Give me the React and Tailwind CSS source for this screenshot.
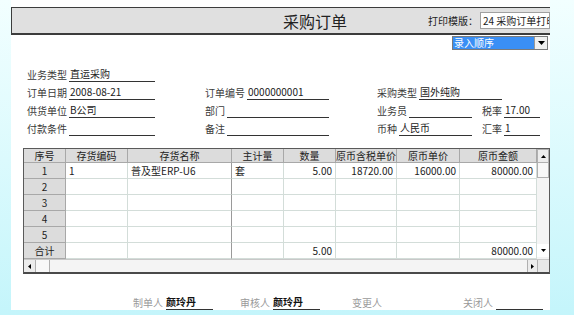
import React from "react"

const cols = [
  { name: "序号", w: "w-[42px]" },
  { name: "存货编码", w: "w-[62px]" },
  { name: "存货名称", w: "w-[104px]" },
  { name: "主计量", w: "w-[52px]" },
  { name: "数量", w: "w-[52px]" },
  { name: "原币含税单价", w: "w-[61px]" },
  { name: "原币单价", w: "w-[63px]" },
  { name: "原币金额", w: "w-[77px]" },
]

const rows = [
  ["1", "1", "普及型ERP-U6", "套", "5.00", "18720.00", "16000.00", "80000.00"],
  ["2", "", "", "", "", "", "", ""],
  ["3", "", "", "", "", "", "", ""],
  ["4", "", "", "", "", "", "", ""],
  ["5", "", "", "", "", "", "", ""],
  ["合计", "", "", "", "5.00", "", "", "80000.00"],
]

function Field({ label, value, className }) {
  return (
    <div className={"flex items-end h-full " + className}>
      <span className="text-[#3a3a3a] leading-[14px] whitespace-nowrap">{label}</span>
      <div className="flex-1 ml-[2px] border-b border-[#333] leading-[14px] pl-[1px] text-[#222] whitespace-nowrap overflow-hidden">
        {value}
      </div>
    </div>
  )
}

function Sign({ label, value, line, className }) {
  return (
    <div className={"flex items-end h-full " + className}>
      <span className="text-[#9a9a9a] leading-[14px] whitespace-nowrap">{label}</span>
      <div className={"flex-1 ml-[3px] leading-[14px] font-bold text-[#111] " + (line ? "border-b border-[#333]" : "")}>
        {value}
      </div>
    </div>
  )
}

function Cell({ col, i, value, isHead, isTotal }) {
  const first = i === 0
  const right = i >= 4
  const darkLine = i === 2
  let cls = "h-full shrink-0 flex items-center overflow-hidden whitespace-nowrap " + col.w + " "
  if (isHead || first) {
    cls += "bg-[#dcdcdc] justify-center border-r border-b border-[#a8a8a8] "
  } else {
    cls += "bg-white border-b border-[#d3ddd9] " + (darkLine ? "border-r border-r-[#9a9a9a] " : "border-r border-r-[#d3ddd9] ")
    cls += right ? "justify-end pr-[3px] " : "justify-start pl-[3px] "
  }
  return <div className={cls}>{value}</div>
}

export default function App() {
  return (
    <div className="w-[574px] h-[315px] overflow-hidden bg-gradient-to-b from-[#f2ffff] to-[#c4f5fb] font-['Noto_Sans_CJK_SC',sans-serif] text-[10px]">
      <div className="ml-[11px] w-[539px] h-[310px] bg-white pt-[7px] flex flex-col">
        {/* title bar */}
        <div className="h-[29px] bg-[#e0e0e0] border-t border-l border-b-2 border-[#3c3c3c] flex items-center">
          <span className="ml-[271px] text-[16px] text-[#222] leading-none">采购订单</span>
          <span className="ml-[81px] text-[#222] whitespace-nowrap">打印模版：</span>
          <div className="ml-[2px] flex-1 h-[17px] bg-white border border-[#a0a0a0] overflow-hidden whitespace-nowrap flex items-center pl-[2px] text-[#222]">
            24 采购订单打印模版
          </div>
        </div>

        {/* sort select */}
        <div className="mt-[1px] h-[14px] flex justify-end pr-[2px]">
          <div className="flex border border-[#7a7a7a]">
            <div className="w-[81px] bg-[#3a8ff5] text-white leading-[12px] pl-[1px]">录入顺序</div>
            <div className="w-[13px] bg-[#f0f0f0] border-l border-[#999] flex items-center justify-center">
              <svg width="7" height="4" viewBox="0 0 7 4"><path d="M0 0h7L3.5 4z" fill="#000" /></svg>
            </div>
          </div>
        </div>

        {/* form */}
        <div className="mt-[14px] pl-[16px] flex flex-col">
          <div className="h-[18px] flex">
            <Field label="业务类型" value="直运采购" className="w-[128px]" />
          </div>
          <div className="h-[18px] flex">
            <Field label="订单日期" value="2008-08-21" className="w-[128px] mr-[50px]" />
            <Field label="订单编号" value="0000000001" className="w-[124px] mr-[48px]" />
            <Field label="采购类型" value="国外纯购" className="w-[125px]" />
          </div>
          <div className="h-[18px] flex">
            <Field label="供货单位" value="B公司" className="w-[128px] mr-[50px]" />
            <Field label="部门" value="" className="w-[124px] mr-[48px]" />
            <Field label="业务员" value="" className="w-[95px] mr-[10px]" />
            <Field label="税率" value="17.00" className="w-[58px]" />
          </div>
          <div className="h-[18px] flex">
            <Field label="付款条件" value="" className="w-[128px] mr-[50px]" />
            <Field label="备注" value="" className="w-[124px] mr-[48px]" />
            <Field label="币种" value="人民币" className="w-[95px] mr-[10px]" />
            <Field label="汇率" value="1" className="w-[58px]" />
          </div>
        </div>

        {/* grid */}
        <div className="mt-[12px] ml-[12px] w-[527px] border border-[#5a5a5a] border-b-2 border-b-[#4a4a4a] text-[#222] flex flex-col">
          <div className="flex">
            <div className="flex flex-col">
              <div className="h-[14px] flex">
                {cols.map((c, i) => (
                  <Cell key={i} col={c} i={i} value={c.name} isHead />
                ))}
              </div>
              {rows.map((r, ri) => (
                <div key={ri} className="h-[16px] flex">
                  {cols.map((c, i) => (
                    <Cell key={i} col={c} i={i} value={r[i]} isTotal={ri === 5} />
                  ))}
                </div>
              ))}
            </div>
            {/* vertical scrollbar */}
            <div className="w-[12px] flex flex-col bg-[#f4f4f4]">
              <div className="h-[14px] bg-[#ececec] border border-[#b0b0b0] flex items-center justify-center">
                <svg width="5" height="3" viewBox="0 0 5 3"><path d="M0 3h5L2.5 0z" fill="#000" /></svg>
              </div>
              <div className="h-[15px] bg-[#f8f8f8] border border-[#b0b0b0] border-t-0" />
              <div className="flex-1" />
              <div className="h-[13px] mb-[2px] bg-white flex items-center justify-center">
                <svg width="5" height="3" viewBox="0 0 5 3"><path d="M0 0h5L2.5 3z" fill="#000" /></svg>
              </div>
            </div>
          </div>
          {/* horizontal scrollbar */}
          <div className="h-[13px] flex bg-[#f4f4f4] border-t border-[#c8c8c8]">
            <div className="w-[12px] bg-[#ececec] border-r border-[#b0b0b0] flex items-center justify-center">
              <svg width="3" height="5" viewBox="0 0 3 5"><path d="M3 0v5L0 2.5z" fill="#000" /></svg>
            </div>
            <div className="w-[14px] bg-[#f8f8f8] border-r border-[#b0b0b0]" />
            <div className="flex-1" />
            <div className="w-[10px] bg-[#ececec] border-l border-[#b0b0b0] flex items-center justify-center">
              <svg width="3" height="5" viewBox="0 0 3 5"><path d="M0 0v5L3 2.5z" fill="#000" /></svg>
            </div>
            <div className="w-[12px] bg-[#e8e8e8] border-l border-[#b0b0b0]" />
          </div>
        </div>

        {/* signatures */}
        <div className="mt-[20px] h-[16px] flex pl-[122px]">
          <Sign label="制单人" value="颜玲丹" line className="w-[80px] mr-[27px]" />
          <Sign label="审核人" value="颜玲丹" line className="w-[80px] mr-[32px]" />
          <Sign label="变更人" value="" className="w-[80px] mr-[31px]" />
          <Sign label="关闭人" value="" line className="w-[80px]" />
        </div>
      </div>
    </div>
  )
}
